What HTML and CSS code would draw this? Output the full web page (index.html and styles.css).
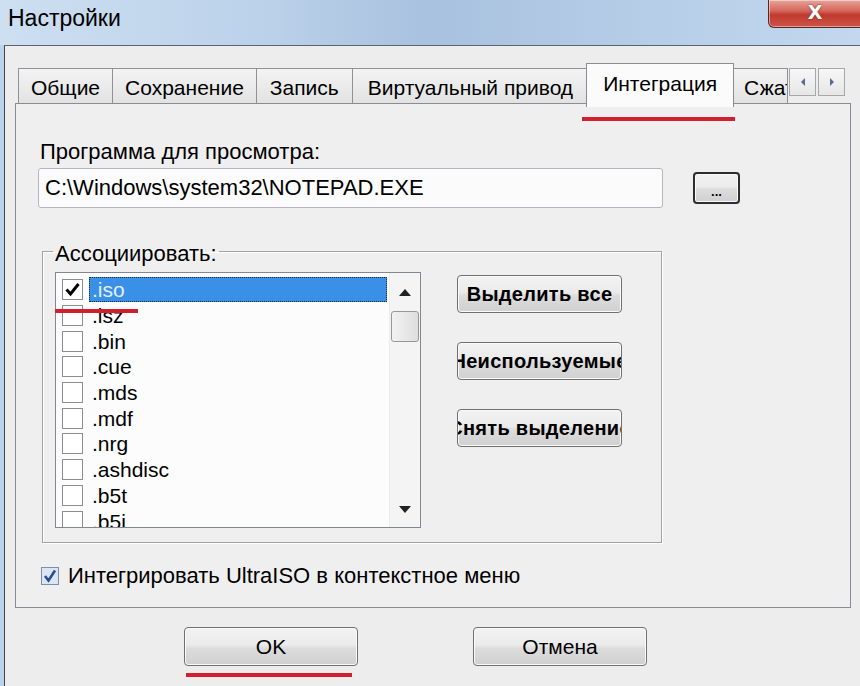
FILE: index.html
```html
<!DOCTYPE html>
<html lang="ru">
  <head>
    <meta charset="UTF-8" />
    <title>Настройки</title>
    <link rel="stylesheet" href="styles.css">
  </head>
  <body>
    <header class="titlebar">
      <span class="title">Настройки</span>
      <div class="close">X</div>
    </header>

    <div class="client">
      <div class="tabs">
        <div class="tab">Общие</div>
        <div class="tab">Сохранение</div>
        <div class="tab mid">Запись</div>
        <div class="tab wide">Виртуальный привод</div>
        <div class="tab active">Интеграция</div>
        <div class="tab cut">Сжатие</div>
        <div class="tab-arrows">
          <span class="arrow">
            <svg width="8" height="10" viewBox="0 0 8 10"><path d="M6 1 L2 5 L6 9 Z" fill="#5b6b8c" /></svg>
          </span>
          <span class="arrow">
            <svg width="8" height="10" viewBox="0 0 8 10"><path d="M2 1 L6 5 L2 9 Z" fill="#5b6b8c" /></svg>
          </span>
        </div>
      </div>

      <div class="panel">
        <div class="field-label">Программа для просмотра:</div>
        <div class="path-row">
          <div class="path">C:\Windows\system32\NOTEPAD.EXE</div>
          <button class="btn browse">...</button>
        </div>

        <fieldset class="assoc">
          <legend>Ассоциировать:</legend>
          <div class="assoc-body">
            <div class="listbox">
              <ul class="items">
                <li class="item">
                  <span class="check">
                    <svg width="19" height="19" viewBox="0 0 19 19"><path d="M3.5 9.5 L7.5 14 L15.5 4" fill="none" stroke="#000" stroke-width="3" /></svg>
                  </span>
                  <span class="ext selected">.iso</span>
                </li>
                <li class="item"><span class="check"></span><span class="ext">.isz</span></li>
                <li class="item"><span class="check"></span><span class="ext">.bin</span></li>
                <li class="item"><span class="check"></span><span class="ext">.cue</span></li>
                <li class="item"><span class="check"></span><span class="ext">.mds</span></li>
                <li class="item"><span class="check"></span><span class="ext">.mdf</span></li>
                <li class="item"><span class="check"></span><span class="ext">.nrg</span></li>
                <li class="item"><span class="check"></span><span class="ext">.ashdisc</span></li>
                <li class="item"><span class="check"></span><span class="ext">.b5t</span></li>
                <li class="item"><span class="check"></span><span class="ext">.b5i</span></li>
              </ul>
              <div class="scrollbar">
                <div class="sb-arrow">
                  <svg width="12" height="7" viewBox="0 0 12 7"><path d="M0 7 L6 0 L12 7 Z" fill="#222" /></svg>
                </div>
                <div class="thumb"></div>
                <div class="sb-arrow down">
                  <svg width="12" height="7" viewBox="0 0 12 7"><path d="M0 0 L6 7 L12 0 Z" fill="#222" /></svg>
                </div>
              </div>
            </div>

            <div class="side-buttons">
              <button class="btn side">Выделить все</button>
              <button class="btn side">Неиспользуемые</button>
              <button class="btn side">Снять выделение</button>
            </div>
          </div>
        </fieldset>

        <div class="integrate">
          <span class="check-blue">
            <svg width="18" height="18" viewBox="0 0 18 18">
              <rect x="0.5" y="0.5" width="17" height="17" fill="#dbe6f4" stroke="#7f8ea6" />
              <path d="M4 9 L7.5 13.5 L14 3.5" fill="none" stroke="#2b4e91" stroke-width="2.6" />
            </svg>
          </span>
          <span>Интегрировать UltraISO в контекстное меню</span>
        </div>
      </div>

      <div class="footer">
        <button class="btn big">OK</button>
        <button class="btn big">Отмена</button>
      </div>

      <div class="mark mark-tab"></div>
      <div class="mark mark-iso"></div>
      <div class="mark mark-ok"></div>
    </div>
  </body>
</html>
```

FILE: styles.css
```css
* {
  margin: 0;
  padding: 0;
  box-sizing: border-box;
}

body {
  width: 860px;
  height: 686px;
  overflow: hidden;
  font-family: "Liberation Sans", Arial, sans-serif;
  font-size: 21px;
  color: #000;
  background: #bcd3eb;
}

/* window caption */
.titlebar {
  height: 45px;
  display: flex;
  justify-content: space-between;
  align-items: flex-start;
  background: linear-gradient(90deg, #cddff1 0%, #bcd2ea 30%, #a8c1de 50%, #b3cbe6 70%, #c3d8ee 100%);
}

.title {
  font-size: 23px;
  padding: 5px 0 0 8px;
}

.close {
  width: 94px;
  height: 28px;
  margin-right: -2px;
  border: 1px solid #5b2520;
  border-top: none;
  border-radius: 0 0 0 6px;
  background: linear-gradient(#e7a59b 0%, #d5665a 40%, #c13a2e 55%, #cc5448 100%);
  box-shadow: inset 0 0 0 1px rgba(255, 255, 255, 0.45);
  color: #fff;
  font-family: "DejaVu Sans", sans-serif;
  font-weight: bold;
  font-size: 19px;
  line-height: 24px;
  text-align: center;
  text-shadow: 0 0 2px #5b2520;
}

/* dialog body */
.client {
  position: relative;
  height: 641px;
  margin-left: 4px;
  padding: 16px 0 0 10px;
  border-left: 1px solid #3f4650;
  border-top: 1px solid #5b6470;
  background: #eeeded;
}

.tabs {
  position: relative;
  z-index: 1;
  display: flex;
  align-items: flex-end;
  height: 41px;
  padding-left: 3px;
}

.tab {
  height: 35px;
  padding: 3px 12px 0;
  margin-right: -1px;
  border: 1px solid #8e9199;
  border-bottom: none;
  background: linear-gradient(#f3f3f3, #e2e2e2);
  white-space: nowrap;
  display: flex;
  align-items: center;
}

.tab.mid {
  padding: 3px 13px 0;
}

.tab.wide {
  padding: 3px 15px 0;
}

.tab.active {
  height: 44px;
  margin: 0 -2px -4px;
  padding: 0 16px 4px;
  background: #fbfbfb;
  border-color: #898c95;
  position: relative;
  z-index: 2;
}

.tab.cut {
  width: 56px;
  padding: 3px 0 0 11px;
  overflow: hidden;
}

.tab-arrows {
  align-self: flex-start;
  display: flex;
  gap: 2px;
  margin: 6px 0 0 2px;
}

.arrow {
  width: 27px;
  height: 28px;
  display: flex;
  align-items: center;
  justify-content: center;
  border: 1px solid #a5a7ab;
  background: linear-gradient(#f7f7f7, #e6e6e6);
}

.panel {
  width: 836px;
  height: 505px;
  padding: 36px 0 0 22px;
  border: 1px solid #898c95;
  background: #f0efef;
  font-size: 22px;
}

.field-label {
  margin-left: 2px;
  line-height: 24px;
}

.path-row {
  display: flex;
  align-items: center;
  margin-top: 4px;
}

.path {
  width: 625px;
  height: 40px;
  padding-left: 6px;
  display: flex;
  align-items: center;
  border: 1px solid #b4b6bb;
  border-radius: 3px;
  background: #fbfbfb;
}

.btn {
  font: inherit;
  color: #000;
  border: 1px solid #707070;
  border-radius: 4px;
  background: linear-gradient(#f2f2f2 0%, #ebebeb 45%, #dcdcdc 55%, #d0d0d0 100%);
  box-shadow: inset 0 0 0 1px #fafafa;
}

.browse {
  width: 47px;
  height: 32px;
  margin-left: 30px;
  border-color: #2e2e2e;
  border-width: 2px;
  font-size: 13px;
  font-weight: bold;
  padding-top: 6px;
}

/* group box */
.assoc {
  width: 620px;
  height: 307px;
  margin: 28px 0 0 4px;
  padding: 0 0 0 12px;
  border: 1px solid #a2a2a2;
  box-shadow: inset 1px 1px 0 #fff, 1px 1px 0 #fff;
}

.assoc legend {
  margin-left: -2px;
  padding: 6px 2px 0;
  line-height: 24px;
}

.assoc-body {
  display: flex;
  margin-top: 6px;
  font-size: 21px;
}

.listbox {
  display: flex;
  width: 366px;
  height: 256px;
  border: 1px solid #828790;
  background: #fcfcfc;
  overflow: hidden;
}

.items {
  flex: 1;
  list-style: none;
  padding-top: 4px;
}

.item {
  display: flex;
  align-items: center;
  height: 25.7px;
}

.check {
  width: 21px;
  height: 21px;
  margin-left: 6px;
  border: 1px solid #8d8d8d;
  background: #fff;
  display: flex;
  align-items: center;
  justify-content: center;
}

.ext {
  flex: 1;
  height: 25px;
  margin: 0 2px 0 6px;
  padding-left: 3px;
  line-height: 25px;
}

.ext.selected {
  background: #3a8fe6;
  color: #e3efff;
  outline: 1px dotted #1c2c40;
  outline-offset: -1px;
}

.scrollbar {
  width: 31px;
  display: flex;
  flex-direction: column;
  align-items: center;
  background: #f4f4f4;
  border-left: 1px solid #ececec;
}

.sb-arrow {
  height: 38px;
  display: flex;
  align-items: center;
  justify-content: center;
}

.sb-arrow.down {
  margin-top: auto;
  height: 36px;
}

.thumb {
  width: 28px;
  height: 31px;
  border: 1px solid #979797;
  border-radius: 3px;
  background: linear-gradient(90deg, #f2f2f2, #dedede);
}

.side-buttons {
  display: flex;
  flex-direction: column;
  gap: 29px;
  margin: 3px 0 0 36px;
}

.btn.side {
  width: 165px;
  height: 38px;
  display: flex;
  align-items: center;
  justify-content: center;
  overflow: hidden;
  white-space: nowrap;
  font-weight: bold;
  font-size: 20px;
  letter-spacing: 0.3px;
}

.integrate {
  display: flex;
  align-items: center;
  gap: 9px;
  margin: 20px 0 0 3px;
}

.check-blue {
  display: flex;
}

.footer {
  display: flex;
  gap: 115px;
  margin: 19px 0 0 169px;
}

.btn.big {
  width: 174px;
  height: 39px;
}

/* red annotation strokes */
.mark {
  position: absolute;
  height: 4px;
  background: #d11f2f;
}

.mark-tab {
  left: 577px;
  top: 71px;
  width: 153px;
}

.mark-iso {
  left: 50px;
  top: 263px;
  width: 83px;
}

.mark-ok {
  left: 181px;
  top: 627px;
  width: 166px;
}
```
